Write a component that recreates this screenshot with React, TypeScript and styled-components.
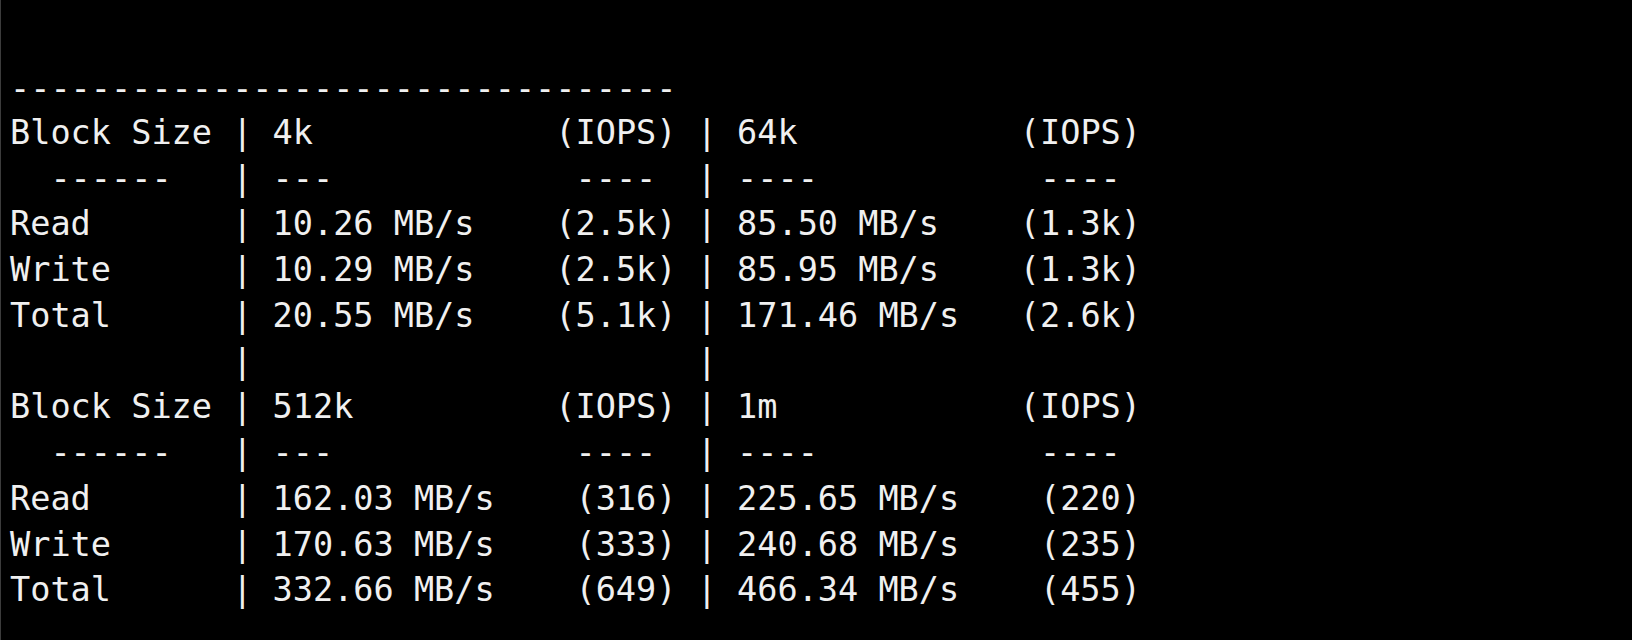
import React from "react";
import styled, { createGlobalStyle } from "styled-components";

const GlobalStyle = createGlobalStyle`
  html, body {
    margin: 0;
    padding: 0;
    background: #000;
  }
  #root {
    min-height: 100vh;
  }
`;

const Screen = styled.div`
  box-sizing: border-box;
  width: 1632px;
  height: 640px;
  background: #000;
  border-left: 1px solid #3c3c3c;
  padding: 64px 0 0 9px;
  color: #f0f0f0;
  font-family: "DejaVu Sans Mono", "Liberation Mono", monospace;
  font-size: 33.55px;
  line-height: 45.77px;
  overflow: hidden;
`;

const Rule = styled.div`
  box-sizing: border-box;
  white-space: pre;
  height: 45.77px;
  padding-top: 2px;
`;

const Row = styled.div`
  display: grid;
  grid-template-columns: 10ch 3ch 14ch 6ch 3ch 14ch 6ch;
  height: 45.77px;
  white-space: pre;
`;

const Cell = styled.span<{ $align?: "left" | "right" | "center" }>`
  text-align: ${(p) => p.$align ?? "left"};
  white-space: pre;
  overflow: visible;
`;

type Line =
  | { kind: "head"; label: string; a: string; b: string }
  | { kind: "sep" }
  | { kind: "data"; label: string; a: string; ai: string; b: string; bi: string }
  | { kind: "blank" };

const lines: Line[] = [
  { kind: "head", label: "Block Size", a: "4k", b: "64k" },
  { kind: "sep" },
  { kind: "data", label: "Read", a: "10.26 MB/s", ai: "(2.5k)", b: "85.50 MB/s", bi: "(1.3k)" },
  { kind: "data", label: "Write", a: "10.29 MB/s", ai: "(2.5k)", b: "85.95 MB/s", bi: "(1.3k)" },
  { kind: "data", label: "Total", a: "20.55 MB/s", ai: "(5.1k)", b: "171.46 MB/s", bi: "(2.6k)" },
  { kind: "blank" },
  { kind: "head", label: "Block Size", a: "512k", b: "1m" },
  { kind: "sep" },
  { kind: "data", label: "Read", a: "162.03 MB/s", ai: "(316)", b: "225.65 MB/s", bi: "(220)" },
  { kind: "data", label: "Write", a: "170.63 MB/s", ai: "(333)", b: "240.68 MB/s", bi: "(235)" },
  { kind: "data", label: "Total", a: "332.66 MB/s", ai: "(649)", b: "466.34 MB/s", bi: "(455)" },
];

function renderLine(l: Line, i: number) {
  switch (l.kind) {
    case "head":
      return (
        <Row key={i}>
          <Cell>{l.label}</Cell>
          <Cell $align="center">|</Cell>
          <Cell>{l.a}</Cell>
          <Cell $align="right">(IOPS)</Cell>
          <Cell $align="center">|</Cell>
          <Cell>{l.b}</Cell>
          <Cell $align="right">(IOPS)</Cell>
        </Row>
      );
    case "sep":
      return (
        <Row key={i}>
          <Cell>{"  ------"}</Cell>
          <Cell $align="center">|</Cell>
          <Cell>---</Cell>
          <Cell>{" ---- "}</Cell>
          <Cell $align="center">|</Cell>
          <Cell>----</Cell>
          <Cell>{" ---- "}</Cell>
        </Row>
      );
    case "data":
      return (
        <Row key={i}>
          <Cell>{l.label}</Cell>
          <Cell $align="center">|</Cell>
          <Cell>{l.a}</Cell>
          <Cell $align="right">{l.ai}</Cell>
          <Cell $align="center">|</Cell>
          <Cell>{l.b}</Cell>
          <Cell $align="right">{l.bi}</Cell>
        </Row>
      );
    default:
      return (
        <Row key={i}>
          <Cell> </Cell>
          <Cell $align="center">|</Cell>
          <Cell> </Cell>
          <Cell> </Cell>
          <Cell $align="center">|</Cell>
          <Cell> </Cell>
          <Cell> </Cell>
        </Row>
      );
  }
}

export default function App() {
  return (
    <>
      <GlobalStyle />
      <Screen>
        <Rule>{"-".repeat(33)}</Rule>
        {lines.map(renderLine)}
      </Screen>
    </>
  );
}
